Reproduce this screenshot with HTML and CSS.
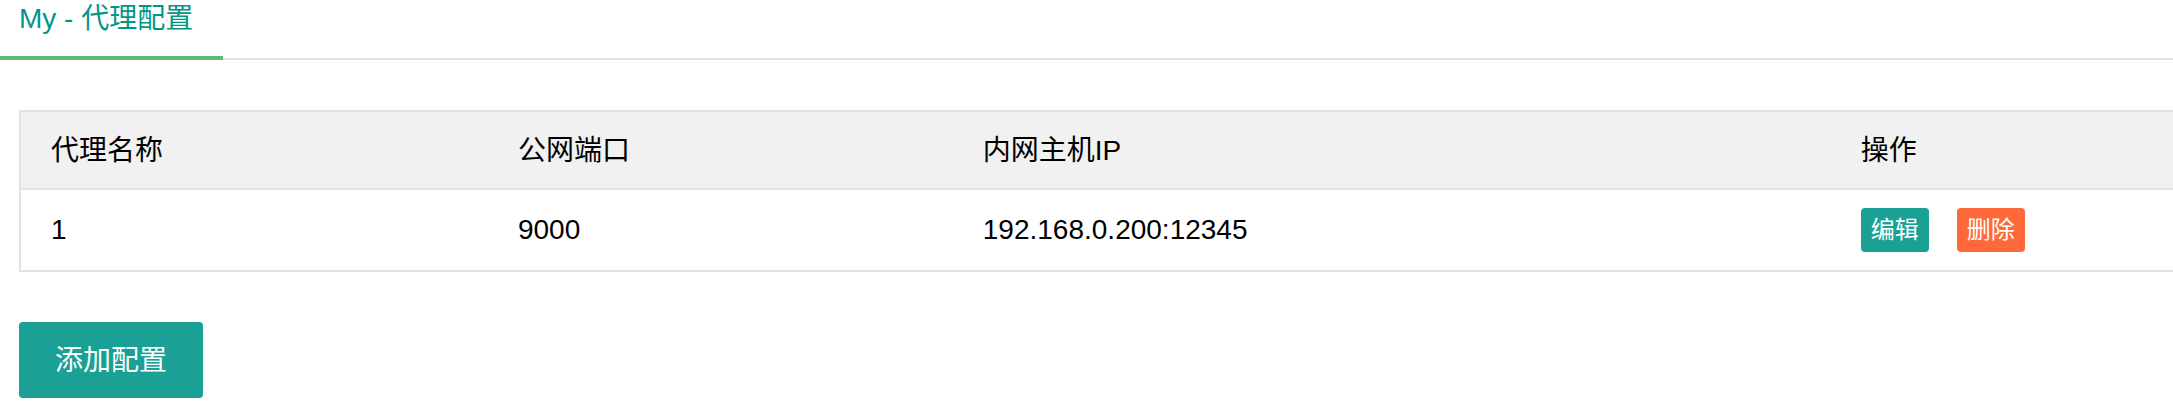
FILE: index.html
```html
<!DOCTYPE html>
<html lang="zh-CN">
<head>
<meta charset="utf-8">
<meta name="viewport" content="width=device-width, initial-scale=1">
<title>My - 代理配置</title>
<link rel="stylesheet" href="styles.css">
</head>
<body>
<nav class="tabs">
  <a class="tab tab-active" href="#proxy">My - 代理配置</a>
</nav>
<main class="content" id="proxy">
  <table class="table">
    <colgroup>
      <col class="col-name">
      <col class="col-port">
      <col class="col-host">
      <col>
    </colgroup>
    <thead>
      <tr>
        <th scope="col">代理名称</th>
        <th scope="col">公网端口</th>
        <th scope="col">内网主机IP</th>
        <th scope="col">操作</th>
      </tr>
    </thead>
    <tbody>
      <tr>
        <td>1</td>
        <td>9000</td>
        <td>192.168.0.200:12345</td>
        <td>
          <div class="actions">
            <button class="btn btn-small" type="button">编辑</button>
            <button class="btn btn-small btn-danger" type="button">删除</button>
          </div>
        </td>
      </tr>
    </tbody>
  </table>
  <button class="btn" type="button">添加配置</button>
</main>
</body>
</html>
```
FILE: styles.css
```css
* {
  box-sizing: border-box;
}

body {
  margin: 0;
  background: #fff;
  color: #000;
  font: 28px/38px "Liberation Sans", "Noto Sans CJK SC", sans-serif;
}

.tabs {
  display: flex;
  border-bottom: 2px solid #e2e2e2;
}

.tab {
  margin-bottom: -2px;
  padding: 0 30px 18px 19px;
  border-bottom: 4px solid transparent;
  color: #009688;
  text-decoration: none;
}

.tab-active {
  border-bottom-color: #5fb878;
}

.content {
  padding: 50px 0 10px 19px;
}

.table {
  width: 100%;
  margin-bottom: 50px;
  border: 2px solid #e2e2e2;
  border-right: 0;
  border-spacing: 0;
  table-layout: fixed;
}

.col-name {
  width: 21.7%;
}

.col-port {
  width: 21.6%;
}

.col-host {
  width: 40.8%;
}

.table th,
.table td {
  padding: 0 30px;
  font-weight: 400;
  text-align: left;
}

.table th {
  height: 78px;
  padding-top: 2px;
  border-bottom: 2px solid #e2e2e2;
  background: #f1f1f1;
}

.table td {
  height: 80px;
}

.actions {
  display: flex;
  gap: 28px;
}

.btn {
  display: block;
  height: 76px;
  padding: 2px 36px 0;
  border: 0;
  border-radius: 4px;
  background: #1aa094;
  color: #fff;
  font: inherit;
  white-space: nowrap;
  cursor: pointer;
}

.btn-small {
  height: 44px;
  padding: 0 10px;
  font-size: 24px;
}

.btn-danger {
  background: #ff6838;
}
```
